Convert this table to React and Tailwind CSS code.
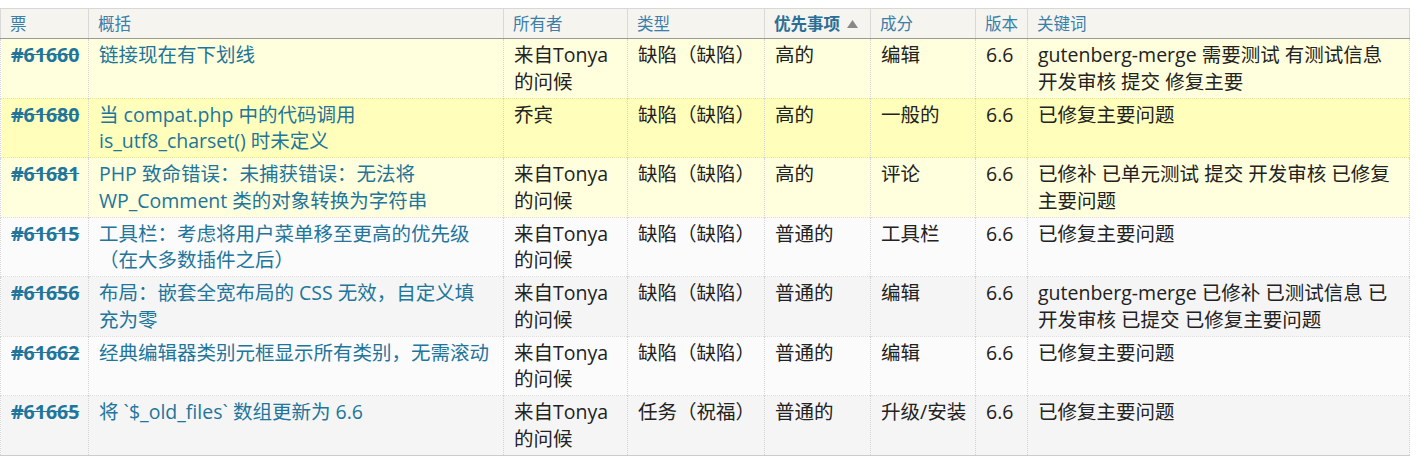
import React from 'react'

const font = { fontFamily: '"Open Sans", "Noto Sans CJK SC", sans-serif' }

const rows = [
  { id: '#61660', summary: '链接现在有下划线', owner: '来自Tonya的问候', type: '缺陷（缺陷）', prio: '高的', comp: '编辑', ver: '6.6', kw: 'gutenberg-merge 需要测试 有测试信息 开发审核 提交 修复主要', tone: 'hi-light' },
  { id: '#61680', summary: '当 compat.php 中的代码调用 is_utf8_charset() 时未定义', owner: '乔宾', type: '缺陷（缺陷）', prio: '高的', comp: '一般的', ver: '6.6', kw: '已修复主要问题', tone: 'hi' },
  { id: '#61681', summary: 'PHP 致命错误：未捕获错误：无法将 WP_Comment 类的对象转换为字符串', owner: '来自Tonya的问候', type: '缺陷（缺陷）', prio: '高的', comp: '评论', ver: '6.6', kw: '已修补 已单元测试 提交 开发审核 已修复主要问题', tone: 'hi-light' },
  { id: '#61615', summary: '工具栏：考虑将用户菜单移至更高的优先级（在大多数插件之后）', owner: '来自Tonya的问候', type: '缺陷（缺陷）', prio: '普通的', comp: '工具栏', ver: '6.6', kw: '已修复主要问题', tone: 'norm-light' },
  { id: '#61656', summary: '布局：嵌套全宽布局的 CSS 无效，自定义填充为零', owner: '来自Tonya的问候', type: '缺陷（缺陷）', prio: '普通的', comp: '编辑', ver: '6.6', kw: 'gutenberg-merge 已修补 已测试信息 已开发审核 已提交 已修复主要问题', tone: 'norm' },
  { id: '#61662', summary: '经典编辑器类别元框显示所有类别，无需滚动', owner: '来自Tonya的问候', type: '缺陷（缺陷）', prio: '普通的', comp: '编辑', ver: '6.6', kw: '已修复主要问题', tone: 'norm-light' },
  { id: '#61665', summary: '将 `$_old_files` 数组更新为 6.6', owner: '来自Tonya的问候', type: '任务（祝福）', prio: '普通的', comp: '升级/安装', ver: '6.6', kw: '已修复主要问题', tone: 'norm' },
]

const toneRow = {
  'hi-light': 'bg-[#ffffdd]',
  hi: 'bg-[#ffffbb]',
  'norm-light': 'bg-[#fbfbfb]',
  norm: 'bg-[#f5f5f5]',
}

const toneCell = {
  'hi-light': 'border-t-[#e8e89a]',
  hi: 'border-t-[#e8e89a]',
  'norm-light': 'border-t-[#dddddd]',
  norm: 'border-t-[#dddddd]',
}

const headers = ['票', '概括', '所有者', '类型', '优先事项', '成分', '版本', '关键词']
const widths = [88, 415, 124, 137, 106, 105, 52, 382]

export default function App() {
  return (
    <div className="bg-white pt-[8px]" style={font}>
      <table className="table-fixed border-collapse w-[1409px] text-[19.5px] leading-[26.75px] text-[#222]">
        <colgroup>
          {widths.map((w, i) => (
            <col key={i} style={{ width: w }} />
          ))}
        </colgroup>
        <thead>
          <tr className="bg-[#f5f4ef]">
            {headers.map((h, i) => (
              <th
                key={h}
                className={`h-[30px] px-[9px] text-left align-middle text-[16.5px] leading-[22px] border-t border-t-[#d7d7d7] border-b border-b-[#999] border-x border-x-[#d9d9d9] ${
                  i === 4 ? 'text-[#2a6f95] font-bold' : 'text-[#3a7eaa] font-normal'
                }`}
              >
                {i === 4 ? (
                  <span className="flex items-center gap-[7px]">
                    {h}
                    <svg width="11" height="8" viewBox="0 0 11 8">
                      <path d="M5.5 0 L11 8 L0 8 Z" fill="#888" />
                    </svg>
                  </span>
                ) : (
                  h
                )}
              </th>
            ))}
          </tr>
        </thead>
        <tbody>
          {rows.map((r) => {
            const td = `pt-[3px] pb-[2px] px-[10px] align-top border-x border-dotted border-x-[#d4d4d4] border-t border-t-solid ${toneCell[r.tone]}`
            return (
              <tr key={r.id} className={toneRow[r.tone]}>
                <td className={td}>
                  <span className="font-bold line-through text-[#21759b]">{r.id}</span>
                </td>
                <td className={td}>
                  <span className="text-[#21759b]">{r.summary}</span>
                </td>
                <td className={td}>{r.owner}</td>
                <td className={td}>{r.type}</td>
                <td className={td}>{r.prio}</td>
                <td className={`${td} whitespace-nowrap`}>{r.comp}</td>
                <td className={td}>{r.ver}</td>
                <td className={td}>{r.kw}</td>
              </tr>
            )
          })}
          <tr>
            <td colSpan={8} className="h-0 p-0 border-t border-t-[#cccccc]"></td>
          </tr>
        </tbody>
      </table>
    </div>
  )
}
